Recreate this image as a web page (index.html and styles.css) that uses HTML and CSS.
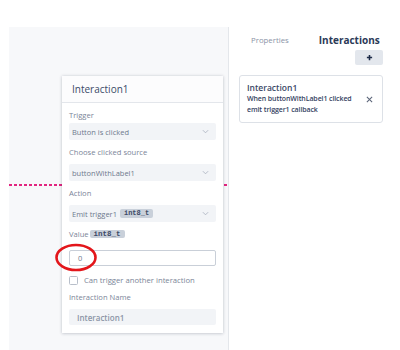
FILE: index.html
```html
<!DOCTYPE html>
<html>
<head>
<meta charset="utf-8">
<link rel="stylesheet" href="styles.css">
</head>
<body>
<div class="app">
  <div class="stage">
    <div class="canvas">
      <div class="guide"></div>
      <div class="card">
        <div class="card-head">Interaction1</div>
        <div class="card-body">
          <div class="label l-first">Trigger</div>
          <div class="select s-tight"><span>Button is clicked</span><svg class="chev" viewBox="0 0 8 5"><path d="M1 1l3 3 3-3" fill="none" stroke="#aeb5c2" stroke-width="1"/></svg></div>
          <div class="label">Choose clicked source</div>
          <div class="select"><span>buttonWithLabel1</span><svg class="chev" viewBox="0 0 8 5"><path d="M1 1l3 3 3-3" fill="none" stroke="#aeb5c2" stroke-width="1"/></svg></div>
          <div class="label">Action</div>
          <div class="select"><span>Emit trigger1 <code class="badge">int8_t</code></span><svg class="chev" viewBox="0 0 8 5"><path d="M1 1l3 3 3-3" fill="none" stroke="#aeb5c2" stroke-width="1"/></svg></div>
          <div class="label">Value<code class="badge badge-v">int8_t</code></div>
          <div class="input-wrap">
            <div class="input">0</div>
            <svg class="mark" viewBox="0 0 46 32"><ellipse cx="22" cy="15.5" rx="19.5" ry="12.5" fill="none" stroke="#e3161b" stroke-width="2.6"/></svg>
          </div>
          <div class="check-row"><span class="box"></span><span>Can trigger another interaction</span></div>
          <div class="label l-name">Interaction Name</div>
          <div class="name-input">Interaction1</div>
        </div>
      </div>
    </div>
  </div>
  <aside class="side">
    <div class="tabs"><span class="tab">Properties</span><span class="tab active">Interactions</span></div>
    <div class="add-row"><div class="add"><svg viewBox="0 0 8 8"><path d="M4 1v6M1 4h6" stroke="#1d2b48" stroke-width="1.8"/></svg></div></div>
    <div class="item">
      <div class="item-text">
        <div class="item-title">Interaction1</div>
        <div class="item-desc">When buttonWithLabel1 clicked<br>emit trigger1 callback</div>
      </div>
      <svg class="close" viewBox="0 0 8 8"><path d="M1 1l6 6M7 1l-6 6" stroke="#5b6579" stroke-width="1.2"/></svg>
    </div>
  </aside>
</div>
</body>
</html>
```

FILE: styles.css
```css
* { box-sizing: border-box; }
html, body { margin: 0; padding: 0; background: #fff; }
body { font-family: "Open Sans", "Liberation Sans", sans-serif; color: #3a4866; }
.app { display: flex; width: 400px; height: 350px; overflow: hidden; }
.stage { padding: 27px 0 0 9px; flex: none; }
.canvas {
  position: relative;
  width: 220px;
  height: 323px;
  background: #f7f8fa;
  border-right: 1px solid #e4e7eb;
  padding: 49px 0 0 53px;
}
.guide {
  position: absolute;
  left: 0; right: 0; top: 157px;
  height: 2px;
  background: repeating-linear-gradient(to right, #e2247f 0 3px, transparent 3px 5px);
}
.card {
  position: relative;
  width: 161px;
  height: 257px;
  background: #fff;
  box-shadow: 0 0 3px rgba(40, 50, 70, 0.18), 0 1px 3px rgba(40, 50, 70, 0.12);
}
.card-head {
  height: 27px;
  display: flex;
  align-items: center;
  padding-left: 10px;
  font-size: 10px;
  font-weight: 500;
  color: #3b4a68;
  border-bottom: 1px solid #e3e6eb;
  background: #fcfcfd;
}
.card-body { padding: 0 7px; display: flex; flex-direction: column; }
.label { font-size: 7.6px; font-weight: 500; line-height: 12px; height: 12px; color: #7b8598; margin-top: 6px; display: flex; align-items: center; }
.l-first { margin-top: 6px; }
.select {
  height: 17px;
  margin-top: 6px;
  background: #f2f4f7;
  border-radius: 2px;
  display: flex;
  align-items: center;
  justify-content: space-between;
  padding: 0 7px 0 3px;
  font-size: 7.5px;
  font-weight: 500;
  color: #6e798d;
}
.select span { display: flex; align-items: center; gap: 3px; }
.s-tight { margin-top: 2px; }
.chev { width: 7px; height: 5px; }
.badge {
  font-family: "Liberation Mono", "DejaVu Sans Mono", monospace;
  font-weight: bold;
  font-size: 7px;
  line-height: 9px;
  background: #c9d0da;
  color: #3d4a66;
  border-radius: 2px;
  padding: 0 4px;
}
.badge-v { font-size: 7.5px; line-height: 8px; padding: 0 4px; margin-left: 1px; }
.input-wrap { position: relative; margin-top: 10px; }
.input {
  height: 16px;
  background: #fff;
  border: 1px solid #c9cfd8;
  border-radius: 2px;
  font-size: 7.5px;
  color: #6e798d;
  display: flex;
  align-items: center;
  padding-left: 8px;
}
.mark { position: absolute; left: -15px; top: -8px; width: 46px; height: 32px; }
.check-row { display: flex; align-items: center; gap: 6px; margin-top: 9px; height: 10px; font-size: 7.7px; font-weight: 500; color: #7b8598; }
.box { width: 9px; height: 9px; border: 1px solid #b8bfca; border-radius: 1.5px; background: #fff; flex: none; }
.l-name { margin-top: 6px; }
.name-input {
  margin-top: 6px;
  height: 16px;
  background: #f2f4f7;
  border-radius: 2px;
  padding-left: 8px;
  display: flex;
  align-items: center;
  font-size: 8px;
  font-weight: 600;
  color: #8b94a6;
}
.side { flex: 1; padding-top: 33px; display: flex; flex-direction: column; }
.tabs { display: flex; align-items: center; height: 14px; padding-left: 22px; }
.tab { font-size: 7.8px; font-weight: 500; color: #8a93a6; }
.tab.active { margin-left: 30px; font-size: 10px; font-weight: bold; color: #2b3a57; }
.add-row { display: flex; justify-content: flex-end; padding-right: 17px; margin-top: 3px; }
.add { width: 28px; height: 15px; background: #e3e7ed; border-radius: 2px; display: flex; align-items: center; justify-content: center; }
.add svg { width: 7px; height: 7px; }
.item {
  margin: 10px 17px 0 10px;
  height: 48px;
  border: 1px solid #dde1e7;
  border-radius: 3px;
  background: #fff;
  display: flex;
  align-items: center;
  justify-content: space-between;
  padding: 0 9px 0 7px;
}
.item-title { font-size: 8.5px; line-height: 11px; font-weight: 600; color: #3a4866; }
.item-desc { font-size: 7px; line-height: 11px; color: #34425f; font-weight: 600; letter-spacing: -0.1px; }
.item-text { margin-top: -2px; }
.close { width: 7px; height: 7px; margin-top: 1px; }
```
